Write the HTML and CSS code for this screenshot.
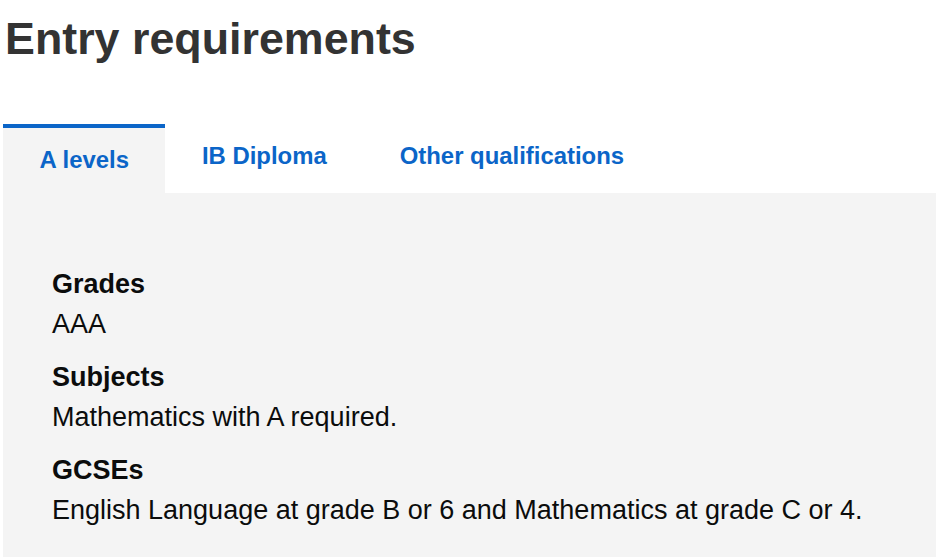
FILE: index.html
```html
<!DOCTYPE html>
<html lang="en">
<head>
<meta charset="utf-8">
<title>Entry requirements</title>
<link rel="stylesheet" href="styles.css">
</head>
<body>
<main class="page">
  <h1 class="title">Entry requirements</h1>
  <section class="tabs">
    <ul class="tab-list">
      <li class="tab tab--active"><a href="#a-levels">A levels</a></li>
      <li class="tab"><a href="#ib">IB Diploma</a></li>
      <li class="tab"><a href="#other">Other qualifications</a></li>
    </ul>
    <div class="panel" id="a-levels">
      <dl class="reqs">
        <dt>Grades</dt>
        <dd>AAA</dd>
        <dt>Subjects</dt>
        <dd>Mathematics with A required.</dd>
        <dt>GCSEs</dt>
        <dd>English Language at grade B or 6 and Mathematics at grade C or 4.</dd>
      </dl>
    </div>
  </section>
</main>
</body>
</html>
```
FILE: styles.css
```css
html, body {
  margin: 0;
  padding: 0;
  background: #ffffff;
}
body {
  font-family: "Liberation Sans", Arial, sans-serif;
  color: #0b0c0c;
}
.page {
  display: flex;
  flex-direction: column;
  height: 557px;
}
.title {
  margin: 12px 0 0 5px;
  font-size: 44.8px;
  line-height: 52px;
  font-weight: 700;
  color: #333333;
}
.tabs {
  margin: 60px 6px 0 3px;
  flex: 1;
  display: flex;
  flex-direction: column;
}
.tab-list {
  list-style: none;
  margin: 0;
  padding: 0;
  display: flex;
}
.tab {
  box-sizing: border-box;
  height: 69px;
  padding: 17px 36.5px 0;
  font-size: 23.9px;
  line-height: 30px;
  font-weight: 700;
  background: #ffffff;
}
.tab a {
  color: #0b65c8;
  text-decoration: none;
}
.tab--active {
  background: #f4f4f4;
  border-top: 4px solid #0b65c8;
}
.panel {
  flex: 1;
  background: #f4f4f4;
  padding: 71px 49px 0;
}
.reqs {
  margin: 0;
  font-size: 27px;
  line-height: 40px;
}
.reqs dt {
  font-weight: 700;
  margin: 0;
}
.reqs dd {
  margin: 0 0 13px 0;
}
```
